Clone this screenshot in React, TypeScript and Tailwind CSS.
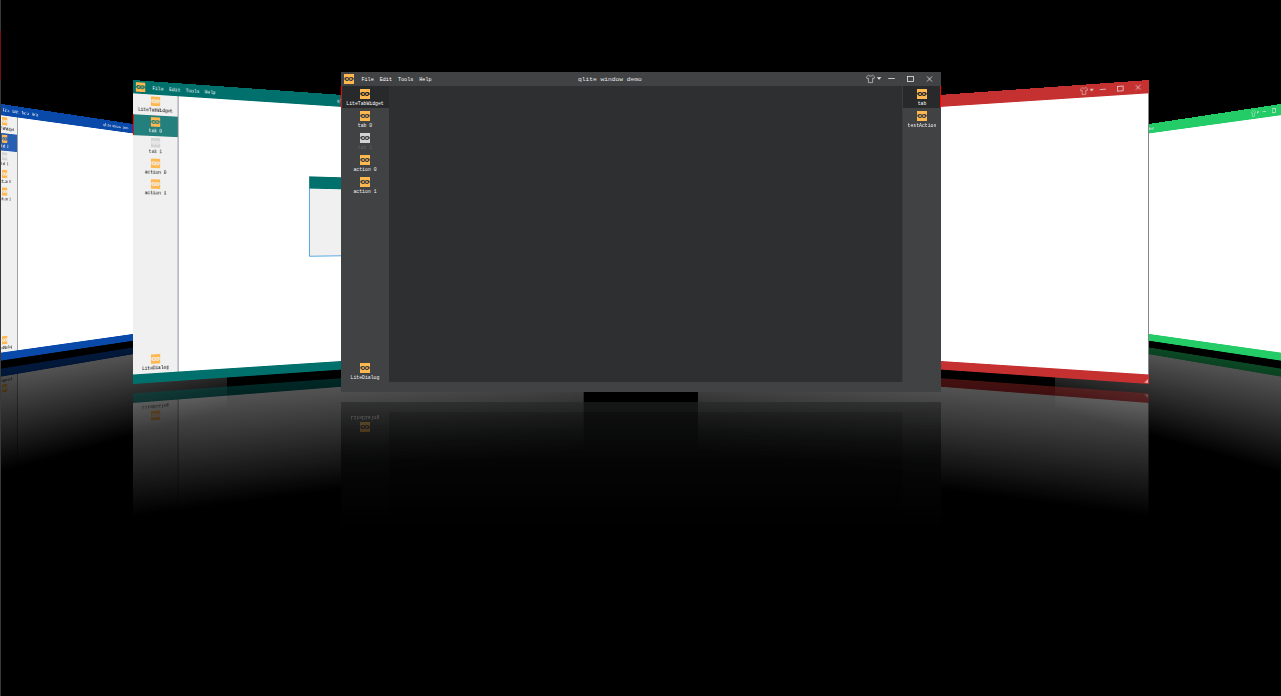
import React from 'react';

type Pt = [number, number];
type Quad = [Pt, Pt, Pt, Pt];

const W = 600;
const H = 320;

/* Projective transform taking a W x H rectangle to four corners (tl, tr, br, bl). */
function project([p0, p1, p2, p3]: Quad): string {
  const dx1 = p1[0] - p2[0], dx2 = p3[0] - p2[0], sx = p0[0] - p1[0] + p2[0] - p3[0];
  const dy1 = p1[1] - p2[1], dy2 = p3[1] - p2[1], sy = p0[1] - p1[1] + p2[1] - p3[1];
  const det = dx1 * dy2 - dx2 * dy1;
  const g = (sx * dy2 - dx2 * sy) / det;
  const h = (dx1 * sy - sx * dy1) / det;
  const a = p1[0] - p0[0] + g * p1[0], b = p3[0] - p0[0] + h * p3[0];
  const d = p1[1] - p0[1] + g * p1[1], e = p3[1] - p0[1] + h * p3[1];
  return `matrix3d(${[a / W, d / W, 0, g / W, b / H, e / H, 0, h / H, 0, 0, 1, 0, p0[0], p0[1], 0, 1].join(',')})`;
}

function Logo({ gray }: { gray?: boolean }) {
  return (
    <svg viewBox="0 0 20 20" className={`block size-[10px] shrink-0 ${gray ? 'text-[#d2d3d4]' : 'text-[#ffb74f]'}`}>
      <path
        fill="currentColor"
        fillRule="evenodd"
        d="M0 0H20V20H0ZM0.500 8.500V11L2 11.500L4 14H8L10 12L12 14H16L18 11.500L19.500 11V8.500L16.500 6H12L10 8L8 6H3.500ZM5 8.300H7.500L8.700 10L7.500 11.700H5L3.800 10ZM12.500 8.300H15L16.200 10L15 11.700H12.500L11.300 10Z"
      />
    </svg>
  );
}

type Theme = {
  bar: string;
  side: string;
  body: string;
  active: string;
  text: string;
  muted: string;
  dark?: boolean;
  activeIndex: number;
};

const themes: Record<string, Theme> = {
  dark: { bar: 'bg-[#414244]', side: 'bg-[#414244]', body: 'bg-[#2e2f31]', active: 'bg-[#28292b] text-white', text: 'text-[#f4f4f4]', muted: 'text-[#626365]', dark: true, activeIndex: 0 },
  teal: { bar: 'bg-[#00706c]', side: 'bg-[#f0f0f0]', body: 'bg-white', active: 'bg-[#24807d] text-white', text: 'text-black', muted: 'text-[#333333]', activeIndex: 1 },
  blue: { bar: 'bg-[#0849a9]', side: 'bg-[#f0f0f0]', body: 'bg-white', active: 'bg-[#285fb3] text-white', text: 'text-black', muted: 'text-[#333333]', activeIndex: 1 },
  red: { bar: 'bg-[#c53030]', side: 'bg-[#f0f0f0]', body: 'bg-white', active: 'bg-[#d05050] text-white', text: 'text-black', muted: 'text-[#333333]', activeIndex: 1 },
  green: { bar: 'bg-[#23cc67]', side: 'bg-[#f0f0f0]', body: 'bg-white', active: 'bg-[#45d57f] text-white', text: 'text-black', muted: 'text-[#333333]', activeIndex: 1 },
};

function SideItem({ label, gray, className = '' }: { label: string; gray?: boolean; className?: string }) {
  return (
    <div className={`flex h-[22px] shrink-0 flex-col items-center ${className}`}>
      <Logo gray={gray} />
      <span className="mt-[1.6px] whitespace-nowrap text-[4.8px] leading-[6px]">{label}</span>
    </div>
  );
}

function Controls() {
  return (
    <svg viewBox="0 0 70 14" className="block h-[14px] w-[70px]" fill="none" stroke="currentColor" strokeWidth="0.8">
      <path d="M2.500 3.200L0.300 5L1.300 6.800L2.400 6.200V10.600H6.600V6.200L7.700 6.800L8.700 5L6.500 3.200C5.500 4.400 3.500 4.400 2.500 3.200Z" strokeWidth="0.6" />
      <path d="M10.800 5.200H15.400L13.100 7.700Z" fill="currentColor" stroke="none" />
      <path d="M22.200 6.500H28.800" strokeWidth="0.8" />
      <rect x="41.500" y="4.500" width="6" height="5" strokeWidth="0.8" />
      <path d="M61 4.500L66 9.500M66 4.500L61 9.500" />
    </svg>
  );
}

const items = ['LiteTabWidget', 'tab 0', 'tab 1', 'action 0', 'action 1'];

function DemoWindow({ theme: t, left, right, dialog, mirror }: {
  theme: Theme; left?: boolean; right?: boolean; dialog?: boolean; mirror?: boolean;
}) {
  const itemPad = t.dark && !mirror ? '*:pt-[3px]' : '*:pt-[2.4px]';
  return (
    <div className={`flex h-[320px] w-[600px] shrink-0 flex-col ${t.bar}`}>
      <header className="flex h-[14px] shrink-0 items-center text-[#e6e6e6]">
        {!mirror && (
          <>
            <div className="flex w-[237px] items-center gap-[7.5px] pl-[3px] text-[5.1px] leading-[12px] text-white">
              <Logo />
              <nav className="flex gap-[6px] pt-[2px]">
                <span>File</span>
                <span>Edit</span>
                <span>Tools</span>
                <span>Help</span>
              </nav>
            </div>
            <span className="grow whitespace-nowrap pt-[2px] text-[6.25px] leading-[12px]">qlite window demo</span>
            <div className="pr-[5px]"><Controls /></div>
          </>
        )}
      </header>
      <div className="flex min-h-0 grow">
        {left && (
          <aside className={`flex shrink-0 flex-col ${itemPad} ${t.side} ${t.text} ${t.dark ? 'w-[48px]' : 'w-[49px] border-r border-[#82878f]'}`}>
            {!mirror && items.map((s, i) => (
              <SideItem
                key={s}
                label={s}
                gray={i === 2}
                className={i === t.activeIndex ? `shadow-[inset_1px_0_0_#ff0000] ${t.active}` : i === 2 ? t.muted : ''}
              />
            ))}
            <SideItem label="LiteDialog" className="mt-auto" />
          </aside>
        )}
        <main className={`flex grow ${t.body} ${right || !t.dark ? 'border-r' : ''} ${t.dark ? 'border-[#3b3c3e]' : 'border-[#82878f]'}`}>
          {dialog && !mirror && (
            <div className="ml-[152.5px] mt-[82px] h-[92px] w-[196px] border border-[#3c9be0] bg-[#f0f0f0]">
              <div className="-mx-px -mt-px h-[14px] bg-[#00706c]" />
            </div>
          )}
        </main>
        {right && (
          <aside className={`flex w-[38px] shrink-0 flex-col ${itemPad} ${t.side} ${t.text}`}>
            {!mirror && (
              <>
                <SideItem label="tab" className={`shadow-[inset_-1px_0_0_#ff0000] ${t.active}`} />
                <SideItem label="testAction" />
              </>
            )}
          </aside>
        )}
      </div>
      <footer className="flex h-[10px] shrink-0 items-end justify-end p-[1px] text-white/60">
        {!t.dark && (
          <svg viewBox="0 0 4 4" className="block size-[4px]">
            <path fill="currentColor" d="M4 0V4H0Z" />
          </svg>
        )}
      </footer>
    </div>
  );
}

type Slide = { id: string; quad: Quad; left?: boolean; right?: boolean; dialog?: boolean };

const slides: Slide[] = [
  { id: 'blue', left: true, quad: [[-8, 102.6], [227, 138.2], [227, 326.5], [-8, 362]] },
  { id: 'green', quad: [[1055, 138.2], [1290, 102.6], [1290, 362], [1055, 326.5]] },
  { id: 'teal', left: true, dialog: true, quad: [[133, 80], [584, 112.2], [584, 352.8], [133, 384]] },
  { id: 'red', quad: [[698, 112.2], [1149, 80], [1149, 384], [698, 352.8]] },
  { id: 'dark', left: true, right: true, quad: [[341, 72], [941, 72], [941, 392], [341, 392]] },
];

export default function App() {
  return (
    <div className="relative h-[696px] w-[1281px] overflow-hidden bg-black font-['Liberation_Mono',monospace]">
      {slides.map(({ id, quad, ...rest }) => (
        <div
          key={id}
          className="absolute left-0 top-0 flex h-[460px] w-[600px] origin-top-left flex-col gap-[10px]"
          style={id === 'dark' ? { left: quad[0][0], top: quad[0][1] } : { transform: project(quad) }}
        >
          <DemoWindow theme={themes[id]} {...rest} />
          <div className={`h-[130px] shrink-0 ${id === 'dark' ? 'bg-[linear-gradient(rgba(0,0,0,.1),rgba(0,0,0,.75)_45%)]' : ''}`}>
            <div className="h-[130px] bg-black opacity-[.54]">
              <div
                className={`h-[130px] overflow-hidden ${
                  id === 'dark'
                    ? '[mask-image:linear-gradient(black,rgba(0,0,0,.75)_20%,rgba(0,0,0,.35)_45%,transparent)]'
                    : '[mask-image:linear-gradient(black,transparent)]'
                }`}
              >
                <div className="-scale-y-100 brightness-[.65]">
                  <DemoWindow theme={themes[id]} {...rest} mirror />
                </div>
              </div>
            </div>
          </div>
        </div>
      ))}
      <div className="absolute left-0 top-0 h-full w-px bg-[#3a3a3a]" />
      <div className="absolute left-0 top-[31px] h-[49px] w-px bg-[#701010]" />
    </div>
  );
}
